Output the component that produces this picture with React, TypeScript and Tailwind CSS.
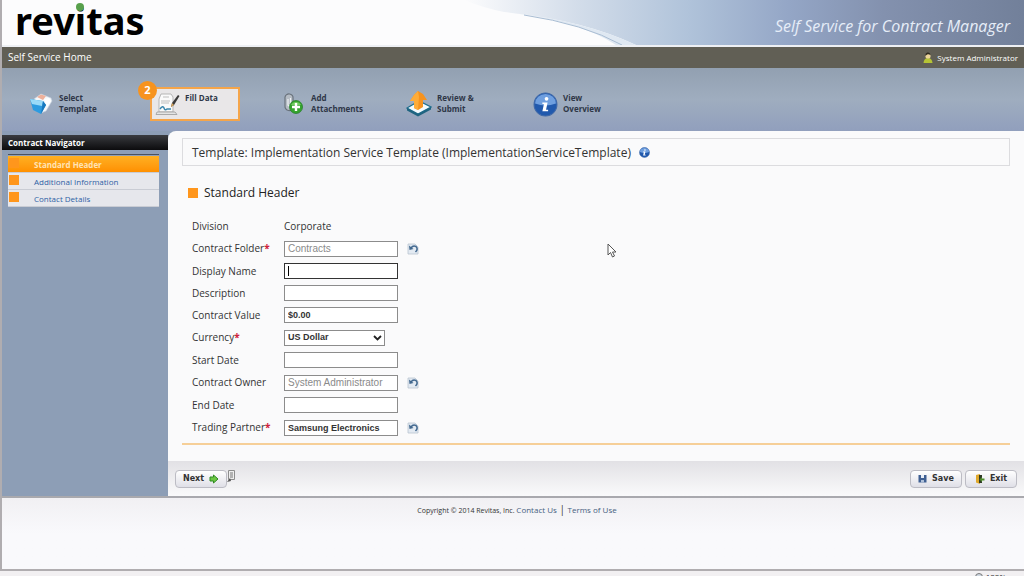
import { useState, type ReactNode } from 'react'

const STEPS = [
  { label: 'Select Template', lines: ['Select', 'Template'], icon: <TemplateIcon /> },
  { label: 'Fill Data', lines: ['Fill Data'], icon: <FillIcon /> },
  { label: 'Add Attachments', lines: ['Add', 'Attachments'], icon: <AttachIcon /> },
  { label: 'Review & Submit', lines: ['Review &', 'Submit'], icon: <SubmitIcon /> },
  { label: 'View Overview', lines: ['View', 'Overview'], icon: <InfoIcon size={25} /> },
]

const SECTIONS = ['Standard Header', 'Additional Information', 'Contact Details']

interface Field {
  id: string
  label: string
  value?: string
  required?: boolean
  lookup?: boolean
  disabled?: boolean
  focus?: boolean
}

const FIELDS: Field[] = [
  { id: 'folder', label: 'Contract Folder', value: 'Contracts', required: true, lookup: true, disabled: true },
  { id: 'name', label: 'Display Name', focus: true },
  { id: 'description', label: 'Description' },
  { id: 'value', label: 'Contract Value', value: '$0.00' },
  { id: 'currency', label: 'Currency', required: true },
  { id: 'start', label: 'Start Date' },
  { id: 'owner', label: 'Contract Owner', value: 'System Administrator', lookup: true, disabled: true },
  { id: 'end', label: 'End Date' },
  { id: 'partner', label: 'Trading Partner', value: 'Samsung Electronics', required: true, lookup: true },
]

function TemplateIcon() {
  return (
    <svg width="24" height="22" viewBox="0 0 24 22">
      <path d="M5 6 L12 1 L22 5 L23 8 L17 18 L12 20 Z" fill="#f4f7fa" stroke="#c3cedb" strokeWidth="0.6" />
      <path d="M8 4 L12 1.500 L17 3 L14 7 Z" fill="#eeb09a" />
      <path d="M15 6 L20 5 L22 8 L18 14 Z" fill="#fff" />
      <path d="M1 6 L14 8 L17 12 L12 21 L4 17 Z" fill="#2d9be0" />
      <path d="M1 6 L14 8 L13 13 L3 11 Z" fill="#9adaf8" />
      <path d="M14 8 L17 12 L12 21 Z" fill="#1878bd" />
    </svg>
  )
}

function FillIcon() {
  return (
    <svg width="25" height="24" viewBox="0 0 25 24">
      <path d="M6 2 H16 L18 5 V20 H4 V7 Z" fill="#fafafa" stroke="#b5b5b5" />
      <path d="M2 20 H20 L22 22.500 H1 Z" fill="#e4e4e4" stroke="#9a9a9a" strokeWidth="0.8" />
      <path d="M8 5 H14 M6 9 H15 M6 11 H14" stroke="#b8b8b8" strokeWidth="0.9" />
      <path d="M5 17 q3 -4 4 -1 t3 1 h4" fill="none" stroke="#3b86ad" strokeWidth="1.500" />
      <path d="M16 15 L17 11 L23 3 L24.500 4 L19 13 Z" fill="#3a3a3a" />
      <path d="M16 15 L17 11 L19 13 Z" fill="#d9a65a" />
    </svg>
  )
}

function AttachIcon() {
  return (
    <svg width="20" height="22" viewBox="0 0 20 22">
      <path d="M2 6 V13 a4 4 0 0 0 8 1 V5 a4 3.500 0 0 0 -8 -1 Z" fill="#b5bcc4" stroke="#69727c" strokeWidth="1.200" />
      <path d="M5 6 V12 a1.300 1.300 0 0 0 2.500 0 V5" fill="none" stroke="#f1f3f5" strokeWidth="1.200" />
      <circle cx="13" cy="14" r="6.500" fill="#35a32f" stroke="#1f7d23" strokeWidth="0.7" />
      <path d="M8 12 a5.500 5 0 0 1 10 0 Z" fill="#73cc62" />
      <path d="M13 10 V18 M9 14 H17" stroke="#fff" strokeWidth="2.400" />
    </svg>
  )
}

function SubmitIcon() {
  return (
    <svg width="26" height="26" viewBox="0 0 26 26">
      <path d="M1 17 L13 10 L25 16 L12 23 Z" fill="#f4fafc" stroke="#1f6f8f" strokeWidth="1.200" />
      <path d="M1 17 L12 23 L25 16 V18.500 L12 25.500 L1 19.500 Z" fill="#1f6480" />
      <path d="M8 17 V10 H4 L8 4 L12 0 L17 3 L21 9 H17 V16 L12 19 Z" fill="#f7931e" />
      <path d="M8 17 V10 H4 L8 4 L12 0 L13 6 L12 19 Z" fill="#ffac38" />
    </svg>
  )
}

function InfoIcon({ size }: { size: number }) {
  return (
    <svg width={size} height={size} viewBox="0 0 24 24">
      <circle cx="12" cy="12" r="11" fill="#2159ad" stroke="#4069a8" />
      <path d="M2 11 a10 9 0 0 1 20 0 q-10 4 -20 0" fill="#6f9fdf" />
      <circle cx="13" cy="6.500" r="1.800" fill="#fff" />
      <path d="M9 10 H14 L12.500 17 H14.500 V18.500 H9 L10.500 11.500 H9 Z" fill="#fff" />
    </svg>
  )
}

function UserIcon() {
  return (
    <svg width="10" height="12" viewBox="0 0 10 12">
      <path d="M0.500 11 Q1 6 5 6 Q9 6 9.500 11 Z" fill="#b6c435" />
      <circle cx="5" cy="4" r="2.600" fill="#ecd49a" />
      <path d="M2.400 4 a2.600 3 0 0 1 5.200 -1 q-2 -1 -3.500 -0.500 Z" fill="#2f2b20" />
    </svg>
  )
}

function LookupIcon() {
  return (
    <svg width="12" height="12" viewBox="0 0 12 12">
      <path d="M1 1 H8 L11 4 V11 H1 Z" fill="#e3eaf2" stroke="#b9c4d0" strokeWidth="0.8" />
      <path d="M4 5 Q6 2 9 3.500 Q11.500 6 8.500 9" fill="none" stroke="#42688f" strokeWidth="1.500" />
      <path d="M2 2.500 L2.500 7 L6.500 6 Z" fill="#42688f" />
    </svg>
  )
}

function NextIcon() {
  return (
    <svg width="10" height="10" viewBox="0 0 10 10">
      <path d="M1 3 H4.500 V1 L9 5 L4.500 9 V7 H1 Z" fill="#6cc644" stroke="#2f8a22" />
    </svg>
  )
}

function SaveIcon() {
  return (
    <svg width="9" height="9" viewBox="0 0 9 9">
      <path d="M0.500 1 H8.500 V8.500 H0.500 Z" fill="#3f5f92" />
      <path d="M3 1 H6 V4 H3 Z" fill="#e8eef7" />
      <path d="M3 6 H6 V8.500 H3 Z" fill="#aebfd8" />
    </svg>
  )
}

function ExitIcon() {
  return (
    <svg width="10" height="10" viewBox="0 0 10 10">
      <path d="M1 1 L5 0 V10 L1 8.500 Z" fill="#e0a92c" />
      <path d="M4 1 H7 V9 H4 Z" fill="#2f3a26" />
      <path d="M4.500 5.500 L7 3 V4.500 H9.500 V6.500 H7 V8 Z" fill="#4e8c2c" />
    </svg>
  )
}

function DocIcon() {
  return (
    <svg width="8" height="13" viewBox="0 0 8 13">
      <path d="M1.500 0.500 H7.500 V9.500 H1.500 Z" fill="#eee" stroke="#8d8d8d" />
      <path d="M3 3 H6 M3 5 H6 M3 7 H6" stroke="#777" />
      <path d="M0 12 L3 8 L4 11 Z" fill="#555" />
    </svg>
  )
}

function HeaderSwoosh() {
  return (
    <svg className="absolute inset-y-0 right-0 h-full w-[560px]" viewBox="0 0 560 45" preserveAspectRatio="none" aria-hidden="true">
      <defs>
        <linearGradient id="swoosh" x1="0" x2="1" y1="0" y2="0">
          <stop offset="0" stopColor="#fcfcfd" />
          <stop offset="0.2" stopColor="#d3ddea" />
          <stop offset="0.4" stopColor="#b0c3da" />
          <stop offset="0.58" stopColor="#94a6c6" />
          <stop offset="0.75" stopColor="#8391ae" />
          <stop offset="1" stopColor="#72809a" />
        </linearGradient>
      </defs>
      <path d="M0 0 H560 V45 H172 Q120 20 40 12 Q20 8 0 0 Z" fill="url(#swoosh)" />
      <path d="M40 12 Q115 20 152 45 H172 Q120 20 40 12 Z" fill="#dfe8f2" />
      <path d="M60 15 Q120 24 158 45" fill="none" stroke="#a9bdd3" />
    </svg>
  )
}

function ToolButton({ children }: { children: ReactNode }) {
  return (
    <button
      type="button"
      className="flex h-[18px] w-[52px] items-center justify-center gap-[5px] rounded-sm border border-[#bcbcc4] bg-linear-to-b from-white to-[#dfdfe7] font-['DejaVu_Sans',sans-serif] text-[8px] font-bold text-[#333]"
    >
      {children}
    </button>
  )
}

function FieldRow({ field }: { field: Field }) {
  const box = "border bg-white px-[3px] font-['Liberation_Sans',sans-serif]"
  const tone = field.disabled ? 'text-[10px] text-[#8a8a8a]' : 'text-[9px] font-bold text-[#333]'
  const edge = field.focus ? 'border-[#333]' : 'border-[#8c8c8c]'
  const tall = field.lookup || field.id === 'currency'
  return (
    <div className={`flex items-center ${tall ? 'h-[23px]' : 'h-[22px]'}`}>
      <label htmlFor={field.id} className="w-[92px] shrink-0">
        {field.label}
        {field.required && <span className="font-bold text-[#d0213a]">*</span>}
      </label>
      {field.id === 'currency' ? (
        <div className="relative">
          <select id={field.id} className={`${box} ${tone} ${edge} block h-4 w-[101px] appearance-none`}>
            <option>US Dollar</option>
          </select>
          <svg className="pointer-events-none absolute top-[5px] right-[3px]" width="9" height="6" viewBox="0 0 9 6">
            <path d="M1 1 L4.500 4.500 L8 1" fill="none" stroke="#222" strokeWidth="1.800" />
          </svg>
        </div>
      ) : (
        <div className="relative">
          <input
            id={field.id}
            type="text"
            defaultValue={field.value}
            disabled={field.disabled}
            className={`${box} ${tone} ${edge} block h-4 w-[114px] outline-none`}
          />
          {field.focus && <span className="absolute top-[3px] left-1 h-[10px] w-px bg-black" />}
        </div>
      )}
      {field.lookup && (
        <button type="button" aria-label={`Choose ${field.label}`} className="ml-[9px]">
          <LookupIcon />
        </button>
      )}
    </div>
  )
}

export default function App() {
  const [step, setStep] = useState(1)
  const [section, setSection] = useState(0)

  return (
    <div className="flex h-screen flex-col overflow-hidden bg-[#f2f0f2] font-['Open_Sans','Noto_Sans',sans-serif] text-[10px] text-[#333]">
      <div className="flex grow flex-col border-b-2 border-l-2 border-[#b0adb0] bg-[#f9f9fc]">
        <header className="relative flex h-[47px] shrink-0 items-start justify-between border-b-2 border-[#eef0f4] bg-[#fcfcfd] pr-[14px] pl-[13px]">
          <HeaderSwoosh />
          <div className="relative font-['Noto_Sans',sans-serif] text-[38px] leading-10 font-bold text-black">
            revitas
            {/* green dot of the i */}
            <span className="absolute top-[3px] left-[61px] size-2 rounded-full bg-[#58a04c]" />
          </div>
          <h1 className="relative pt-[14px] text-[16px] leading-6 text-[#e6edf8] italic">Self Service for Contract Manager</h1>
        </header>

        <div className="flex h-[21px] shrink-0 items-center justify-between bg-[#615f55] px-[6px] text-white">
          <a href="#home">Self Service Home</a>
          <span className="flex items-center gap-1 text-[8px]">
            <UserIcon />
            System Administrator
          </span>
        </div>

        <nav className="flex h-[63px] shrink-0 items-start bg-linear-to-b from-[#92a0b1] via-[#9fadbf] to-[#919fbd] pt-[19px] pl-[22px]">
          {STEPS.map((s, i) => (
            <div key={s.label} className="relative w-[126px]">
              <button
                type="button"
                onClick={() => setStep(i)}
                className={`flex h-[34px] w-[90px] border-2 text-left ${i === step ? 'border-[#f5a54a] bg-[#e9e7e8]' : 'border-transparent'}`}
              >
                <span className="flex h-full w-[30px] shrink-0 items-center justify-center">{s.icon}</span>
                <span className="pt-[3px] pl-[3px] text-[8px] leading-[11px] font-bold whitespace-nowrap text-[#2f3747]">
                  {s.lines.map(line => <span key={line} className="block">{line}</span>)}
                </span>
              </button>
              {i === step && (
                <span className="absolute -top-[6px] -left-3 flex size-[19px] items-center justify-center rounded-full bg-[#f7931e] text-[11px] font-bold text-white">
                  {i + 1}
                </span>
              )}
            </div>
          ))}
        </nav>

        <div className="flex shrink-0 border-b-2 border-[#a9a9ae] bg-[#8d9eb6]">
          <aside className="w-[166px] shrink-0 pt-1">
            <h2 className="h-[15px] bg-linear-to-b from-[#3a3c40] to-[#0c0c0e] pl-[6px] text-[8px] leading-[15px] font-bold text-white">
              Contract Navigator
            </h2>
            <ul className="mt-1 mr-[9px] ml-[6px] border-t border-[#4a5260] pt-px">
              {SECTIONS.map((name, i) => (
                <li key={name}>
                  <a
                    href="#section"
                    onClick={() => setSection(i)}
                    className={`flex h-[17px] items-start border-b border-[#c9ccd4] text-[8px] leading-[17px] ${i === section ? 'bg-linear-to-b from-[#ffb020] to-[#ff9000] font-bold text-[#ffe3b5]' : 'bg-[#e6e7ec] text-[#2f5fa5]'}`}
                  >
                    <span className="mt-[2px] mr-[15px] ml-px size-[10px] bg-[#ff961c]" />
                    {name}
                  </a>
                </li>
              ))}
            </ul>
          </aside>

          <main className="flex min-w-0 grow flex-col rounded-tl-lg bg-[#fafafb]">
            <div className="mx-[14px] mt-[7px] flex h-7 items-center gap-2 border border-[#dcdcdf] pt-px pl-[9px] text-[12px]">
              Template: Implementation Service Template (ImplementationServiceTemplate)
              <InfoIcon size={11} />
            </div>
            <form className="mx-[14px] border-b-2 border-[#f6cf98] pt-4 pb-1">
              <h2 className="flex h-[22px] items-center gap-[6px] pl-[6px] text-[12px] text-[#222]">
                <span className="size-[10px] bg-[#ff961c]" />
                Standard Header
              </h2>
              <div className="mt-[11px] pl-[10px]">
                <div className="flex h-[22px] items-center">
                  <span className="w-[92px]">Division</span>
                  <span>Corporate</span>
                </div>
                {FIELDS.map(f => <FieldRow key={f.id} field={f} />)}
              </div>
            </form>
            <div className="mt-4 flex h-[35px] items-center bg-linear-to-b from-[#e2e1e5] to-[#fafafb] px-[7px]">
              <ToolButton>Next <NextIcon /></ToolButton>
              <span className="pb-[5px]"><DocIcon /></span>
              <div className="ml-auto flex gap-[3px]">
                <ToolButton><SaveIcon /> Save</ToolButton>
                <ToolButton><ExitIcon /> Exit</ToolButton>
              </div>
            </div>
          </main>
        </div>

        <footer className="grow bg-linear-to-b from-[#f1f0f3] via-[#f9f9fc] to-[#f9f9fc] pt-1 pl-2 text-center">
          <span className="text-[7px]">Copyright © 2014 Revitas, Inc. </span>
          <a href="#contact" className="text-[8px] text-[#46607f]">Contact Us</a>
          <span className="text-[10px]"> | </span>
          <a href="#terms" className="text-[8px] text-[#46607f]">Terms of Use</a>
        </footer>
      </div>
      <div className="flex h-[5px] shrink-0 items-start justify-end gap-[3px] overflow-hidden pr-[18px] text-[8px] leading-[11px]">
        <svg className="mt-[2px] shrink-0" width="8" height="8" viewBox="0 0 8 8">
          <circle cx="4" cy="4" r="3.500" fill="#cfd8e2" stroke="#777" />
        </svg>
        100%
      </div>

      <svg className="pointer-events-none absolute top-[243px] left-[607px]" width="10" height="15" viewBox="0 0 10 15" aria-hidden="true">
        <path d="M1 1 V12 L3.500 9.500 L5.500 14 L7.500 13 L5.500 9 H9 Z" fill="#fff" stroke="#555" />
      </svg>
    </div>
  )
}
